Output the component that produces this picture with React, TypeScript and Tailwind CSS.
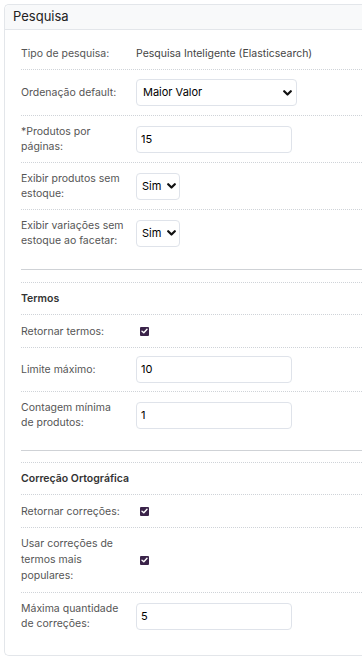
import type { ReactNode } from "react"

const font = { fontFamily: "Inter, 'Noto Sans', sans-serif" }

function Chevron() {
    return (
        <svg width="9" height="6" viewBox="0 0 9 6">
            <path d="M1.2 1.2 L4.5 4.5 L7.8 1.2" stroke="#111" strokeWidth="2.2" fill="none" strokeLinecap="round" strokeLinejoin="round" />
        </svg>
    )
}

function Check() {
    return (
        <span className="ml-[4px] flex h-[9px] w-[9px] items-center justify-center rounded-[1px] bg-[#3a2349]">
            <svg width="7" height="6" viewBox="0 0 7 6">
                <path d="M1 3.2 L2.8 4.8 L6 1.2" stroke="#fff" strokeWidth="1.4" fill="none" strokeLinecap="round" strokeLinejoin="round" />
            </svg>
        </span>
    )
}

function Select({ value, wide }: { value: string; wide?: boolean }) {
    return (
        <div
            className={
                wide
                    ? "flex h-[27px] w-[161px] items-center justify-between rounded-[4px] border border-[#dfe3ea] bg-white pl-[6px] pr-[4px] text-[11px] text-[#000]"
                    : "flex h-[27px] w-[44px] items-center justify-between rounded-[4px] border border-[#dfe3ea] bg-white pl-[5px] pr-[3px] text-[11px] text-[#000]"
            }
        >
            <span>{value}</span>
            <Chevron />
        </div>
    )
}

function Input({ value }: { value: string }) {
    return (
        <div className="flex h-[27px] w-[156px] items-center rounded-[4px] border border-[#dfe3ea] bg-white pl-[4px] text-[11px] text-[#000]">
            {value}
        </div>
    )
}

function Row({
    label,
    children,
    last,
    py = "py-[8px]",
    leading = "leading-[15px]",
}: {
    label: ReactNode
    children?: ReactNode
    last?: boolean
    py?: string
    leading?: string
}) {
    return (
        <div className={`flex items-center ${py} ${last ? "" : "border-b border-dotted border-[#cfd3d8]"}`}>
            <div className={`flex min-h-[16px] w-[115px] shrink-0 items-center pr-[12px] text-[10.5px] text-[#555] ${leading}`}>
                <span>{label}</span>
            </div>
            <div className="flex items-center">{children}</div>
        </div>
    )
}

function SectionTitle({ children }: { children: ReactNode }) {
    return (
        <div className="border-y border-dotted border-[#cfd3d8] py-[8px] text-[10.5px] font-semibold leading-[15px] text-[#333]">
            {children}
        </div>
    )
}

export default function App() {
    return (
        <div className="min-h-[660px] bg-white pl-[4px] pt-[4px]" style={font}>
            <div className="h-[652px] rounded-l-[5px] border-y border-l border-[#e3e6ea] bg-white">
                <div className="flex h-[25px] items-center rounded-tl-[5px] border-b border-[#e3e6ea] bg-[#f8f9fa] px-[8px] text-[13px] text-[#222]">
                    Pesquisa
                </div>
                <div className="pl-[16px] pt-[7px]">
                    <Row label="Tipo de pesquisa:">
                        <span className="text-[10.5px] leading-[15px] text-[#444]">Pesquisa Inteligente (Elasticsearch)</span>
                    </Row>
                    <Row label="Ordenação default:" py="py-[9px]">
                        <Select value="Maior Valor" wide />
                    </Row>
                    <Row label="*Produtos por páginas:">
                        <Input value="15" />
                    </Row>
                    <Row label="Exibir produtos sem estoque:">
                        <Select value="Sim" />
                    </Row>
                    <Row label="Exibir variações sem estoque ao facetar:" last>
                        <Select value="Sim" />
                    </Row>

                    <div className="mb-[12px] mt-[13px] border-t border-[#cfd2d6]" />

                    <SectionTitle>Termos</SectionTitle>
                    <Row label="Retornar termos:">
                        <Check />
                    </Row>
                    <Row label="Limite máximo:">
                        <Input value="10" />
                    </Row>
                    <Row label="Contagem mínima de produtos:" last>
                        <Input value="1" />
                    </Row>

                    <div className="mb-[11px] mt-[12px] border-t border-[#cfd2d6]" />

                    <SectionTitle>Correção Ortográfica</SectionTitle>
                    <Row label="Retornar correções:">
                        <Check />
                    </Row>
                    <Row label="Usar correções de termos mais populares:" leading="leading-[16px]">
                        <Check />
                    </Row>
                    <Row label="Máxima quantidade de correções:" last>
                        <Input value="5" />
                    </Row>
                </div>
            </div>
        </div>
    )
}
